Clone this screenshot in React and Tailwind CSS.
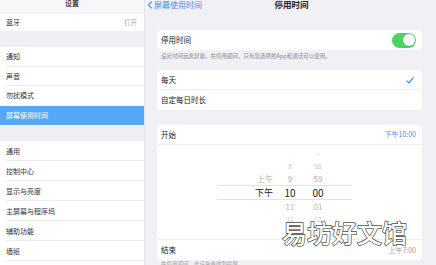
import React from "react";

const F = "font-['Noto_Sans_CJK_SC','Noto_Sans',sans-serif]";

function Row({ label, right, sep = true, active = false, h = "h-5" }) {
  return (
    <div className={`${h} shrink-0 flex items-center pl-[6px] pr-[7px] ${active ? "bg-[#58a7f4]" : "bg-white"} relative`}>
      <span className={`text-[7px] leading-none ${active ? "text-white" : "text-[#333]"}`}>{label}</span>
      <div className="flex-1" />
      {right && <span className="text-[6.5px] leading-none text-[#aaa]">{right}</span>}
      {sep && !active && <div className="absolute left-[6px] right-0 bottom-0 h-px bg-[#ececf0]" />}
    </div>
  );
}

function PickerRow({ h = "h-[13px]", ap, hr, mn, cls, apCls, selected }) {
  return (
    <div className={`${h} shrink-0 flex items-center ml-[60px] w-[135px] ${selected ? "border-y border-[#e2e2e6]" : ""}`}>
      <div className={`w-[56px] text-right leading-none ${apCls || cls}`}>{ap}</div>
      <div className={`w-[34px] text-center leading-none ${cls}`}>{hr}</div>
      <div className={`w-[22px] text-center leading-none ${cls}`}>{mn}</div>
    </div>
  );
}

export default function App() {
  return (
    <div className={`${F} w-[436px] h-[265px] overflow-hidden flex bg-[#f0f0f5] relative`}>
      {/* Sidebar */}
      <div className="w-[145px] shrink-0 bg-[#efeff4] border-r border-[#e3e3e8] flex flex-col overflow-hidden">
        <div className="h-[14px] shrink-0 bg-[#f7f7f9] flex justify-center">
          <span className="text-[7px] leading-none text-[#222] font-medium">设置</span>
        </div>
        <Row label="蓝牙" right="打开" h="h-[17px]" sep={false} />
        <div className="h-[16px] shrink-0" />
        <Row label="通知" h="h-[19.5px]" />
        <Row label="声音" h="h-[19.5px]" />
        <Row label="勿扰模式" h="h-[19.5px]" sep={false} />
        <Row label="屏幕使用时间" h="h-[19.5px]" active />
        <div className="h-[16px] shrink-0" />
        <Row label="通用" />
        <Row label="控制中心" />
        <Row label="显示与亮度" />
        <Row label="主屏幕与程序坞" />
        <Row label="辅助功能" />
        <Row label="墙纸" />
        <Row label="" />
      </div>

      {/* Main */}
      <div className="flex-1 flex flex-col overflow-hidden">
        <div className="h-[14px] shrink-0 flex items-start relative">
          <div className="flex items-center pl-[2px] pt-[1px] text-[#3d8ff0]">
            <svg width="6" height="8" viewBox="0 0 6 8" fill="none">
              <path d="M4.5 0.8 L1.5 4 L4.5 7.2" stroke="#3d8ff0" strokeWidth="1.1" strokeLinecap="round" strokeLinejoin="round" />
            </svg>
            <span className="text-[8px] leading-none ml-[1px]">屏幕使用时间</span>
          </div>
          <div className="absolute left-0 right-0 top-0 flex justify-center pl-[2px]">
            <span className="text-[8.5px] leading-none font-bold text-[#222]">停用时间</span>
          </div>
        </div>

        <div className="h-[16px] shrink-0" />

        {/* Card 1 */}
        <div className="shrink-0 ml-[12px] mr-[14px] bg-white rounded-[4px] h-[20px] flex items-center pl-[4px] pr-[6px]">
          <span className="text-[7.5px] leading-none text-[#222]">停用时间</span>
          <div className="flex-1" />
          <div className="w-[24px] h-[15px] rounded-full bg-[#4cd463] flex items-center justify-end px-[1.5px]">
            <div className="w-[12px] h-[12px] rounded-full bg-white shadow-[0_0.5px_1px_rgba(0,0,0,0.2)]" />
          </div>
        </div>
        <div className="shrink-0 ml-[16px] mt-[4px] h-[16px] text-[5.5px] leading-none text-[#8a8a8e]">
          设定时间远离屏幕。在停用期间，只有您选择的App和通话可以使用。
        </div>

        {/* Card 2 */}
        <div className="shrink-0 ml-[12px] mr-[14px] bg-white rounded-[4px] flex flex-col">
          <div className="h-[20px] flex items-center pl-[4px] pr-[8px] relative">
            <span className="text-[7.5px] leading-none text-[#222]">每天</span>
            <div className="flex-1" />
            <svg width="8" height="7" viewBox="0 0 8 7" fill="none">
              <path d="M0.8 3.8 L2.9 5.9 L7.2 0.9" stroke="#3d8ff0" strokeWidth="1.1" strokeLinecap="round" strokeLinejoin="round" />
            </svg>
            <div className="absolute left-[4px] right-0 bottom-0 h-px bg-[#ededf0]" />
          </div>
          <div className="h-[20px] flex items-center pl-[4px]">
            <span className="text-[7.5px] leading-none text-[#222]">自定每日时长</span>
          </div>
        </div>

        <div className="h-[15px] shrink-0" />

        {/* Card 3 */}
        <div className="shrink-0 ml-[12px] mr-[14px] bg-white rounded-[4px] flex flex-col">
          <div className="h-[20px] shrink-0 flex items-center pl-[4px] pr-[6px] border-b border-[#ededf0]">
            <span className="text-[7.5px] leading-none text-[#222]">开始</span>
            <div className="flex-1" />
            <span className="text-[7px] leading-none text-[#3d8ff0]">下午10:00</span>
          </div>
          <div className="h-[95px] shrink-0 flex flex-col pt-[3px] border-b border-[#ededf0]">
            <PickerRow h="h-[12px]" ap="" hr="7" mn="57" cls="text-[4px] text-[#e2e2e2]" />
            <PickerRow h="h-[13px]" ap="" hr="8" mn="58" cls="text-[6.5px] text-[#c8c8c8]" />
            <PickerRow h="h-[12px]" ap="上午" hr="9" mn="59" cls="text-[8px] text-[#b0b0b0]" />
            <PickerRow h="h-[15px]" ap="下午" hr="10" mn="00" cls="text-[10px] text-[#222]" apCls="text-[9px] text-[#222]" selected />
            <PickerRow h="h-[13px]" ap="" hr="11" mn="01" cls="text-[8px] text-[#b8b8b8]" />
            <PickerRow h="h-[12px]" ap="" hr="12" mn="02" cls="text-[6.5px] text-[#cacaca]" />
            <PickerRow h="h-[12px]" ap="" hr="1" mn="03" cls="text-[4px] text-[#e2e2e2]" />
          </div>
          <div className="h-[20px] shrink-0 flex items-center pl-[4px] pr-[6px]">
            <span className="text-[7.5px] leading-none text-[#222]">结束</span>
            <div className="flex-1" />
            <span className="text-[7px] leading-none text-[#9a9a9e]">上午7:00</span>
          </div>
        </div>
        <div className="shrink-0 ml-[16px] mt-[2px] text-[5.5px] leading-none text-[#a0a0a4]">
          在停用期间，此设备会收到提醒。
        </div>
      </div>

      {/* Watermark */}
      <div className="absolute left-[282px] top-[220px] text-[25px] leading-none text-white font-medium [-webkit-text-stroke:1.4px_#4a4a4a] [paint-order:stroke_fill]">
        易坊好文馆
      </div>
    </div>
  );
}
